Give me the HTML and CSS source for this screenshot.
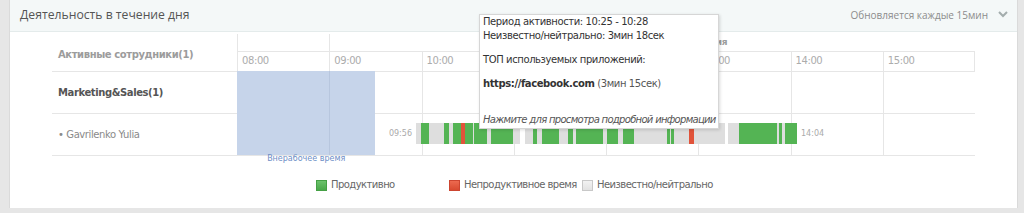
FILE: index.html
```html
<!DOCTYPE html>
<html lang="ru">
<head>
<meta charset="utf-8">
<title>Деятельность в течение дня</title>
<link rel="stylesheet" href="styles.css">
</head>
<body>
<div class="panel">
  <div class="panel-head">
    <h2 class="title">Деятельность в течение дня</h2>
    <div class="refresh">
      <span>Обновляется каждые 15мин</span>
      <svg class="chev" width="10" height="7" viewBox="0 0 10 7"><polyline points="1,1 5,5 9,1" fill="none" stroke="#a3adad" stroke-width="2"/></svg>
    </div>
  </div>
  <div class="panel-body">
    <div class="timeline">
      <div class="lbl lbl-head">Активные сотрудники(1)</div>
      <div class="top-row">
        <div class="top-cell c1"></div>
        <div class="top-cell c2"><span class="work-label">Рабочее время</span></div>
      </div>
      <div class="hour">08:00</div>
      <div class="hour">09:00</div>
      <div class="hour">10:00</div>
      <div class="hour">11:00</div>
      <div class="hour">12:00</div>
      <div class="hour">13:00</div>
      <div class="hour">14:00</div>
      <div class="hour last">15:00</div>

      <div class="lbl lbl-group">Marketing&amp;Sales(1)</div>
      <div class="lbl lbl-user">• Gavrilenko Yulia</div>

      <div class="track">
        <div class="cell"></div><div class="cell"></div><div class="cell"></div><div class="cell"></div>
        <div class="cell"></div><div class="cell"></div><div class="cell"></div><div class="cell"></div>
        <div class="cell"></div><div class="cell"></div><div class="cell"></div><div class="cell"></div>
        <div class="cell"></div><div class="cell"></div><div class="cell"></div><div class="cell"></div>

        <div class="offwork"><span class="offwork-label">Внерабочее время</span></div>
        <div class="bar">
          <span class="t-start">09:56</span>
          <span class="seg g" style="left:5px;width:8px"></span>
          <span class="seg g" style="left:28px;width:5px"></span>
          <span class="seg g" style="left:37px;width:8px"></span>
          <span class="seg r" style="left:45px;width:4px"></span>
          <span class="seg g" style="left:49px;width:8px"></span>
          <span class="seg g" style="left:58px;width:13px"></span>
          <span class="seg g" style="left:75px;width:22px"></span>
          <span class="seg w" style="left:104px;width:5px"></span>
          <span class="seg g" style="left:117px;width:4px"></span>
          <span class="seg g" style="left:126px;width:17px"></span>
          <span class="seg g" style="left:152px;width:5px"></span>
          <span class="seg g" style="left:160px;width:27px"></span>
          <span class="seg g" style="left:191px;width:11px"></span>
          <span class="seg g" style="left:207px;width:11px"></span>
          <span class="seg g" style="left:251px;width:2.5px"></span>
          <span class="seg g" style="left:255px;width:3px"></span>
          <span class="seg r" style="left:273px;width:5px"></span>
          <span class="seg w" style="left:309px;width:3px"></span>
          <span class="seg g" style="left:323px;width:38px"></span>
          <span class="seg g" style="left:363px;width:3px"></span>
          <span class="seg g" style="left:369px;width:12px"></span>
          <span class="t-end">14:04</span>
        </div>
      </div>
    </div>

    <div class="legend">
      <div class="li"><span class="sw sw-g"></span>Продуктивно</div>
      <div class="li"><span class="sw sw-r"></span>Непродуктивное время</div>
      <div class="li"><span class="sw sw-n"></span>Неизвестно/нейтрально</div>
    </div>
  </div>

  <div class="tooltip">
    <p class="tp">Период активности: 10:25 - 10:28<br>Неизвестно/нейтрально: 3мин 18сек</p>
    <p class="tp gap">ТОП используемых приложений:</p>
    <p class="tp gap"><b class="app">https://facebook.com</b> <span class="dur">(3мин 15сек)</span></p>
    <p class="tp hint">Нажмите для просмотра подробной информации</p>
  </div>
</div>
</body>
</html>
```
FILE: styles.css
```css
* { box-sizing: border-box; }

body {
  margin: 0;
  width: 1024px;
  height: 213px;
  overflow: hidden;
  background: #e6e6e6;
  font-family: "DejaVu Sans", Verdana, sans-serif;
  font-size: 10px;
  letter-spacing: -0.4px;
  color: #555;
}

.panel {
  position: relative;
  margin-left: 9px;
  width: 1009px;
  height: 208px;
  background: #fff;
  border-left: 1px solid #dadada;
  border-right: 1px solid #dadada;
}

.panel-head {
  height: 32px;
  background: #f4f8f8;
  border-bottom: 1px solid #e4ebeb;
  display: flex;
  align-items: center;
  justify-content: space-between;
  padding: 0 9px 2px 10px;
}

.title {
  margin: 0;
  font-family: "Open Sans", sans-serif;
  font-weight: 400;
  font-size: 12.2px;
  letter-spacing: 0;
  color: #555;
}

.refresh {
  display: flex;
  align-items: center;
  gap: 10px;
  font-family: "Open Sans", sans-serif;
  font-size: 10px;
  letter-spacing: 0;
  color: #8c8c8c;
}

.panel-body {
  padding: 2px 0 0 42px;
}

.timeline {
  display: grid;
  grid-template-columns: 185px repeat(8, 92.25px);
  grid-template-rows: 17px 21px 42px 42px;
}

.lbl {
  grid-column: 1;
  display: flex;
  align-items: center;
  padding-left: 6px;
  border-bottom: 1px solid #e6e6e6;
}

.lbl-head {
  grid-row: 1 / 3;
  padding-top: 3px;
  font-weight: bold;
  color: #9c9c9c;
}

.lbl-group {
  grid-row: 3;
  font-weight: bold;
  color: #555;
}

.lbl-user {
  grid-row: 4;
  color: #8a8a8a;
}

.top-row {
  grid-column: 2 / -1;
  grid-row: 1;
  display: flex;
}

.top-cell {
  border-left: 1px solid #e6e6e6;
}

.c1 { width: 92.25px; }

.c2 {
  flex: 1;
  padding-left: 324px;
  overflow: hidden;
}

.work-label {
  display: block;
  line-height: 17px;
  font-size: 9px;
  font-weight: bold;
  color: #9c9c9c;
  white-space: nowrap;
}

.hour {
  grid-row: 2;
  border: 1px solid #e6e6e6;
  border-right: 0;
  padding: 3px 0 0 4px;
  color: #acacac;
  line-height: 12px;
}

.hour.last { border-right: 1px solid #e6e6e6; }

.track {
  grid-column: 2 / -1;
  grid-row: 3 / 5;
  position: relative;
  display: grid;
  grid-template-columns: repeat(8, 1fr);
  grid-template-rows: 42px 42px;
}

.cell {
  border-left: 1px solid #e6e6e6;
  border-bottom: 1px solid #e6e6e6;
}

.offwork {
  position: absolute;
  left: 0;
  top: -1px;
  width: 138.4px;
  height: 84px;
  background: #c6d4ea;
}

.offwork::before {
  content: "";
  position: absolute;
  left: 92.25px;
  top: 0;
  bottom: 0;
  width: 1px;
  background: #b7c6de;
}

.offwork-label {
  position: absolute;
  top: calc(100% - 1px);
  left: 0;
  right: 0;
  text-align: center;
  font-size: 8px;
  line-height: 10px;
  letter-spacing: 0;
  color: #6d8ec6;
}

.bar {
  position: absolute;
  left: 179px;
  top: 51px;
  width: 381px;
  height: 21px;
  background: #dedede;
}

.seg {
  position: absolute;
  top: 0;
  bottom: 0;
}

.seg.g { background: #54b454; }
.seg.r { background: #e1533a; }
.seg.w { background: #fff; }

.t-start,
.t-end {
  position: absolute;
  top: 0;
  line-height: 21px;
  font-size: 8px;
  letter-spacing: 0;
  color: #aaa;
}

.t-start { right: calc(100% + 4px); }
.t-end { left: calc(100% + 4px); }

.legend {
  display: flex;
  margin: 22px 0 0 264px;
  line-height: 14px;
  color: #666;
  letter-spacing: -0.55px;
}

.li {
  width: 133px;
  display: flex;
  align-items: center;
  gap: 4px;
  white-space: nowrap;
}

.sw {
  width: 11px;
  height: 11px;
  border: 1px solid;
}

.sw-g { background: linear-gradient(#6cc26c, #4aa84a); border-color: #45a045; }
.sw-r { background: linear-gradient(#ec6a50, #d84a30); border-color: #cc4530; }
.sw-n { background: linear-gradient(#f2f2f2, #e2e2e2); border-color: #c8c8c8; }

.tooltip {
  position: absolute;
  left: 469px;
  top: 14px;
  width: 240px;
  height: 115px;
  background: #fff;
  border: 1px solid #d6d6d6;
  box-shadow: 1px 1px 3px rgba(0, 0, 0, 0.15);
  padding: 0 0 0 3px;
  color: #333;
  line-height: 14px;
  z-index: 5;
}

.tp { margin: 0; white-space: nowrap; }
.tp.gap { margin-top: 10px; }

.app { color: #333; }
.dur { color: #555; }

.hint {
  margin-top: 22px;
  font-style: italic;
  letter-spacing: -0.7px;
  color: #555;
}
```
